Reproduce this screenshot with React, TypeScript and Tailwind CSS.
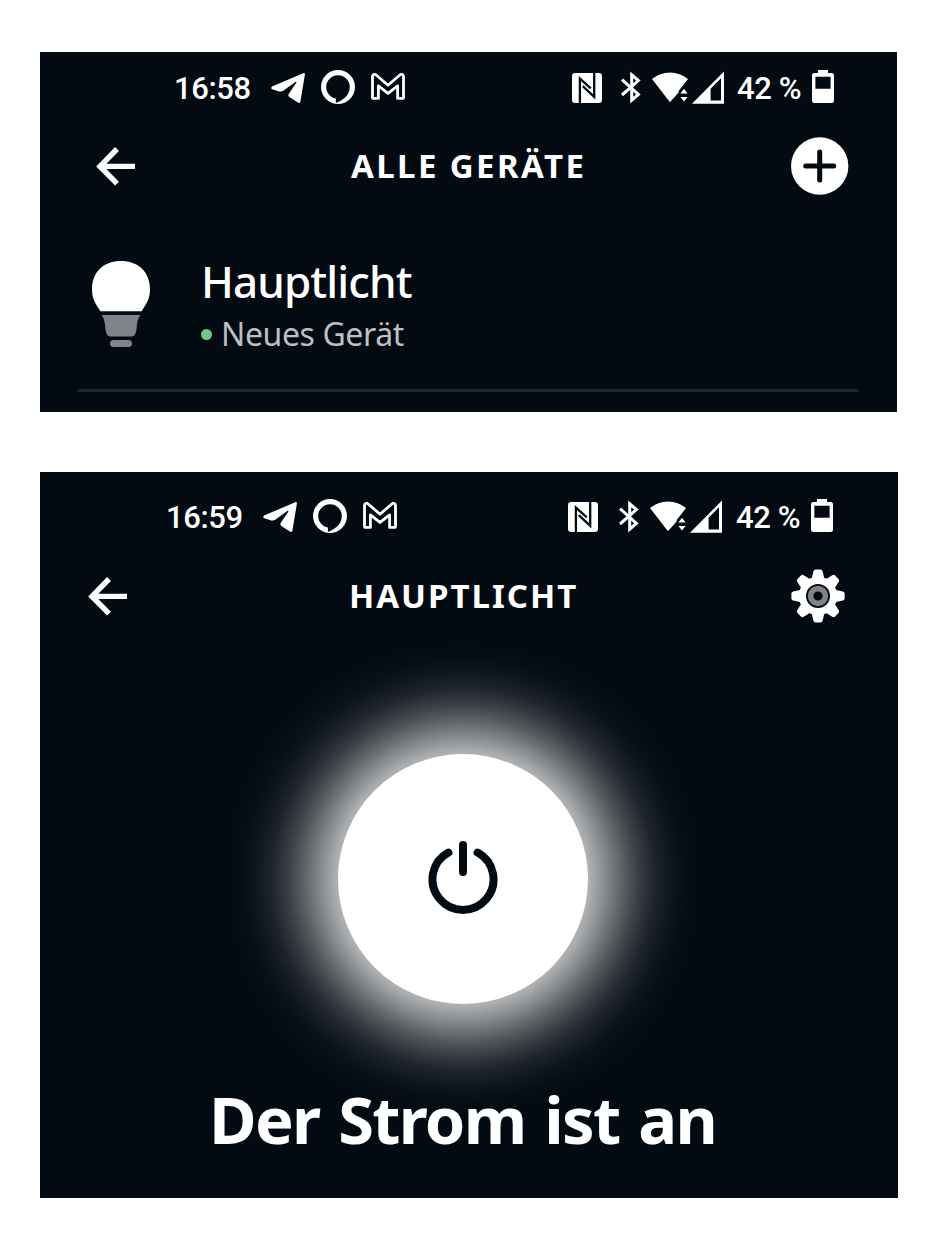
import React from "react";

const ROBOTO = "font-['Roboto',sans-serif]";
const NOTO = "font-['Noto_Sans',sans-serif]";

function TelegramIcon() {
  return (
    <svg className="shrink-0" width="34" height="34" viewBox="0 0 34 34" fill="#fff">
      <path d="M1 16.6 32.2 3.2Q34 2.6 33.9 4.6L29.4 31.4Q28.8 33.6 26.8 32.6L18.4 27Q16.6 25.6 18 23.6L25.4 12.4Q25.6 11.4 24.6 11.8L12.6 20.6Q10.6 22 8.2 21.4L1.2 19.3Q-.6 18 1 16.6Z" />
    </svg>
  );
}

function AlexaIcon() {
  return (
    <svg className="shrink-0" width="34" height="34" viewBox="0 0 34 34">
      <path
        fill="#fff"
        fillRule="evenodd"
        d="M17 0a17 17 0 1 1 0 34a17 17 0 1 1 0-34ZM17 5.2A11.8 11.8 0 0 0 5.2 17C5.2 22.8 9.4 27.6 14.9 28.6V32.8L16.4 32.4C20.6 30.2 28.8 26.4 28.8 17A11.8 11.8 0 0 0 17 5.2Z"
      />
    </svg>
  );
}

function GmailIcon() {
  return (
    <svg className="shrink-0" width="34" height="34" viewBox="0 0 34 34" fill="none" stroke="#fff" strokeWidth="2.8" strokeLinejoin="round">
      <path d="M1.5 27.2V6.4C1.5 4.2 4 3.8 5.2 5L17 15.2 28.8 5C30 3.8 32.5 4.2 32.5 6.4V27.2Q32.5 28.4 31.2 28.4H26.6V15.8L17 23.4 7.4 15.8V28.4H2.8Q1.5 28.4 1.5 27.2Z" />
    </svg>
  );
}

function NfcIcon() {
  return (
    <svg className="shrink-0" width="30" height="34" viewBox="0 0 30 34">
      <rect x="0" y="3" width="30" height="30" rx="3.2" fill="#fff" />
      <path d="M7.9 33V8.6L18.8 18.4M10.8 16.2 22.2 26.8V3" fill="none" stroke="#030a11" strokeWidth="2.3" />
    </svg>
  );
}

function BluetoothIcon() {
  return (
    <svg className="shrink-0" width="20" height="34" viewBox="0 0 20 34" fill="none" stroke="#fff" strokeWidth="3">
      <path d="M1 9.6 17.4 24.4 10.7 30.2V4.8L17.4 10.6 1 25" />
    </svg>
  );
}

function WifiIcon() {
  return (
    <svg className="shrink-0" width="36" height="34" viewBox="0 0 36 34" fill="#fff">
      <path d="M0 9Q8 2.4 18 2.4T36 9L31.4 15 26.6 21V22.4L18.6 31.6Q18 32.4 17.4 31.6Z" />
      <path d="M32 18.8 35.6 23.4H28.4ZM32 31.6 28.4 27H35.6Z" />
    </svg>
  );
}

function SignalIcon() {
  return (
    <svg className="shrink-0" width="32" height="34" viewBox="0 0 32 34">
      <path fill="#fff" fillRule="evenodd" d="M32 1.4V33.8H0ZM29 8.2 18.6 18.8V30.4H29Z" />
    </svg>
  );
}

function BatteryIcon() {
  return (
    <svg className="shrink-0" width="22" height="34" viewBox="0 0 22 34">
      <path
        fill="#fff"
        fillRule="evenodd"
        d="M6 0H16V3H19.5Q22 3 22 5.5V30.5Q22 33 19.5 33H2.5Q0 33 0 30.5V5.5Q0 3 2.5 3H6ZM3.4 6.8V18.8H18.6V6.8Z"
      />
    </svg>
  );
}

function StatusBar({ time, inset, gaps }: { time: string; inset: string; gaps: string[] }) {
  return (
    <div className={`flex h-[34px] justify-between text-[31px] leading-[38px] font-medium text-white ${ROBOTO} ${inset}`}>
      <div className="flex gap-4">
        <span className="mr-1 w-[77px] whitespace-nowrap tracking-[-0.4px]">{time}</span>
        <TelegramIcon />
        <AlexaIcon />
        <GmailIcon />
      </div>
      <div className="flex">
        <NfcIcon />
        <div className={gaps[0]} />
        <BluetoothIcon />
        <div className={gaps[1]} />
        <WifiIcon />
        <div className={gaps[2]} />
        <SignalIcon />
        <span className={`w-[66px] whitespace-nowrap tracking-[-0.4px] ${gaps[3]}`}>42 %</span>
        <div className="w-[9px]" />
        <BatteryIcon />
      </div>
    </div>
  );
}

function BackArrow() {
  return (
    <svg className="shrink-0" width="40" height="40" viewBox="0 0 40 40" fill="none" stroke="#fff" strokeWidth="5.4">
      <path d="M39 20.4H5M21 3 4 20.4 21 37.6" />
    </svg>
  );
}

function PlusIcon() {
  return (
    <svg className="shrink-0" width="58" height="58" viewBox="0 0 58 58">
      <circle cx="28.7" cy="29" r="28.7" fill="#fff" />
      <path d="M14.7 29H42.7M28.7 15V43" stroke="#030a11" strokeWidth="5" strokeLinecap="round" />
    </svg>
  );
}

function GearIcon() {
  const angles = [0, 45, 90, 135, 180, 225, 270, 315];
  return (
    <svg className="shrink-0" width="54" height="54" viewBox="-27 -27 54 54">
      {angles.map((a) => (
        <path key={a} transform={`rotate(${a})`} fill="#fff" d="M-6.6-16-4.6-24.8Q-4.2-26.6-2.4-26.6H2.4Q4.2-26.6 4.6-24.8L6.6-16V-8H-6.6Z" />
      ))}
      <circle r="19.2" fill="#fff" />
      <circle r="12" fill="#030a11" />
      <circle r="7.4" fill="none" stroke="#808388" strokeWidth="5.6" />
    </svg>
  );
}

function BulbIcon() {
  return (
    <svg className="shrink-0" width="58" height="86" viewBox="0 0 58 86">
      <path fill="#fff" d="M8.4 50.2C3.6 42.8 0 37.4 0 28.4 0 10.6 12 0 29 0S58 10.6 58 28.4C58 37.4 54.4 42.8 49.6 50.2Z" />
      <path fill="#808388" d="M9.6 54H48.4C45.6 58 45.2 61 44.8 66 44.2 71.6 43.2 75.4 39.6 75.4H18.4C14.8 75.4 13.8 71.6 13.2 66 12.8 61 12.4 58 9.6 54Z" />
      <rect x="18" y="79" width="22" height="7" rx="3.5" fill="#808388" />
    </svg>
  );
}

function PowerIcon() {
  return (
    <svg width="72" height="76" viewBox="-36 -38 72 76" fill="none" stroke="#030a11" strokeWidth="8" strokeLinecap="round">
      <path d="M-14.6-26.4A30.5 30.5 0 1 0 14.6-26.4M0-34V-7" />
    </svg>
  );
}

export default function App() {
  return (
    <main className={`h-[1242px] w-[942px] bg-white pt-[52px] pl-10 text-white ${NOTO}`}>
      <section className="h-[360px] w-[857px] bg-[#030a11] pt-[18px]">
        <StatusBar time="16:58" inset="pl-[134px] pr-[63px]" gaps={["w-[19px]", "w-[11px]", "w-1", "ml-[13px]"]} />
        <header className="mt-[33px] flex h-[58px] items-center pl-14">
          <BackArrow />
          <h1 className="ml-[215px] w-[440px] text-[33px] leading-[60px] font-bold tracking-[2.4px] whitespace-nowrap">ALLE GERÄTE</h1>
          <PlusIcon />
        </header>
        <div className="mr-[39px] ml-[38px] flex h-[197px] border-b-[3px] border-[#20262f] pt-[66px] pl-[14px]">
          <BulbIcon />
          <div className="ml-[51px] flex flex-col">
            <span className="-mt-[2px] text-[44px] leading-[44px] font-medium tracking-[-0.9px] whitespace-nowrap">Hauptlicht</span>
            <div className="mt-[12px] flex items-center gap-[9px]">
              <span className="size-[11px] rounded-full bg-[#6bc985]" />
              <span className="text-[32px] leading-[38px] tracking-[-0.4px] whitespace-nowrap text-[#bdbfc2]">Neues Gerät</span>
            </div>
          </div>
        </div>
      </section>

      <section className="mt-[60px] flex h-[726px] w-[858px] flex-col bg-[#030a11] pt-[27px]">
        <StatusBar time="16:59" inset="pl-[126px] pr-[65px]" gaps={["w-[21px]", "w-[11px]", "w-1", "ml-[14px]"]} />
        <header className="mt-[34px] flex h-[58px] items-center pl-12">
          <BackArrow />
          <h1 className="ml-[221px] w-[442px] text-[33px] leading-[60px] font-bold tracking-[2px] whitespace-nowrap">HAUPTLICHT</h1>
          <GearIcon />
        </header>
        <div className="mt-[129px] ml-[298px] flex size-[250px] items-center justify-center rounded-full bg-white shadow-[0_0_80px_25px_#ffffff]">
          <PowerIcon />
        </div>
        <p className="mt-[75px] ml-[169px] text-[65px] leading-[80px] font-bold tracking-[-1.7px] whitespace-nowrap [word-spacing:3.6px]">
          Der Strom ist an
        </p>
      </section>
    </main>
  );
}
